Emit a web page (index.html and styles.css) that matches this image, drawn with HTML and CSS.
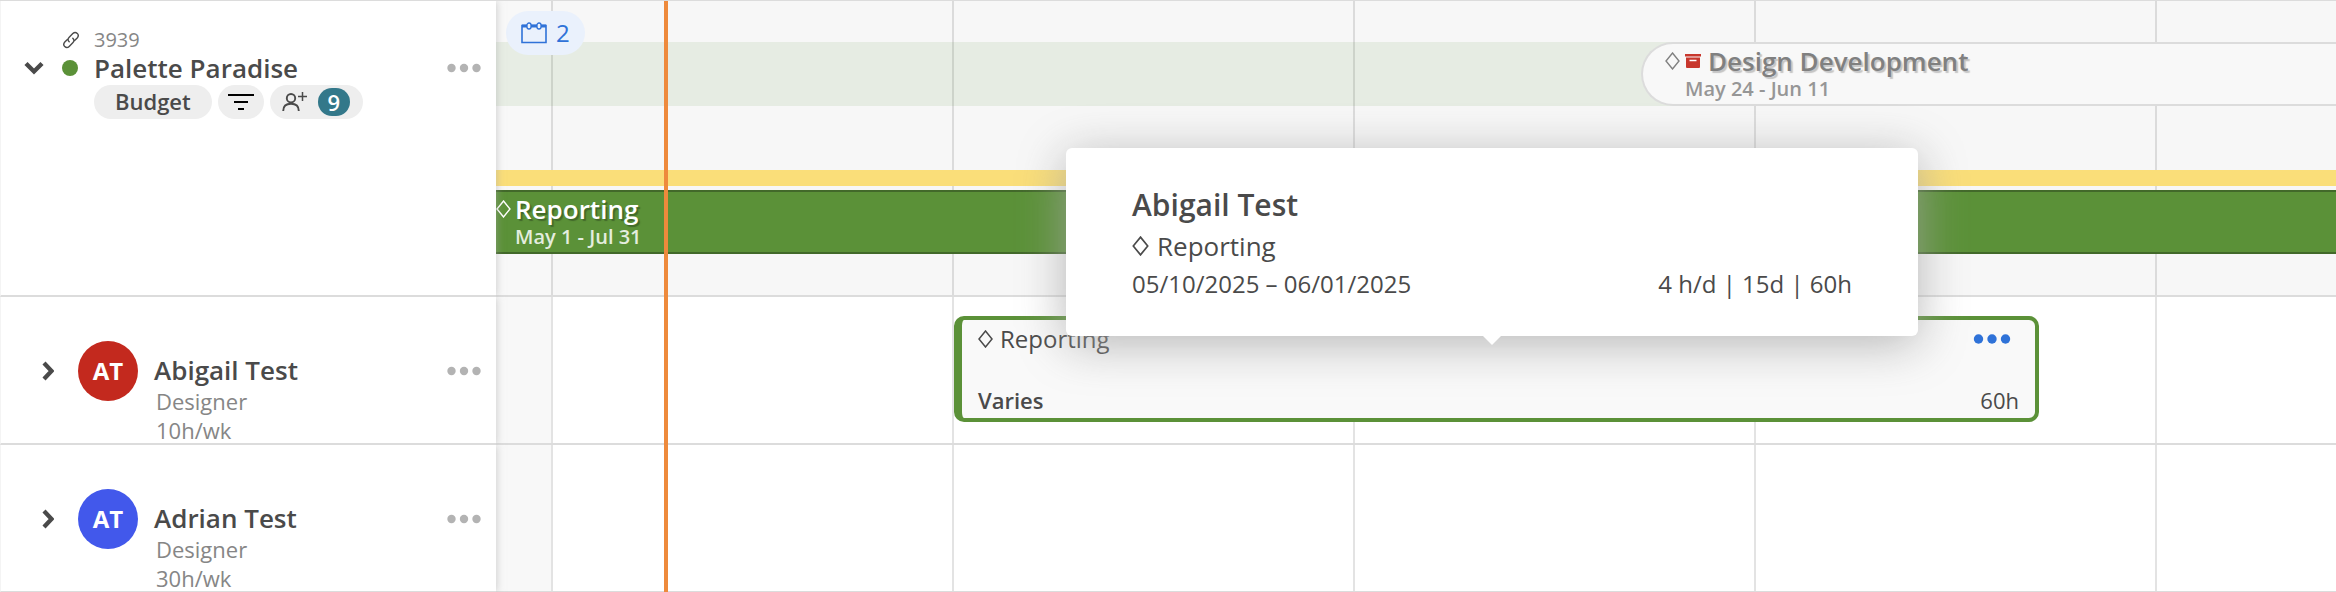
FILE: index.html
```
<!DOCTYPE html>
<html lang="en">
<head>
    <meta charset="UTF-8">
    <meta name="viewport" content="width=device-width, initial-scale=1.0">
    <title>Project schedule</title>
    <link rel="stylesheet" href="styles.css">
</head>
<body>
    <main class="schedule">
        <div class="weeks">
            <span class="week weekend"></span>
            <span class="week"></span>
            <span class="week"></span>
            <span class="week"></span>
            <span class="week"></span>
        </div>

        <section class="row project-row">
            <div class="side project">
                <svg class="link-icon" width="18" height="18" viewBox="0 0 18 18">
                    <g fill="none" stroke="#4a4a4a" stroke-width="1.4" stroke-linecap="round">
                        <path d="M7.2 10.8C5.6 9.3 5.8 7.6 7 6.4l3.8-3.8c1.4-1.4 3.2-1.4 4.5-.2 1.2 1.3 1.2 3.1-.1 4.5l-2.6 2.6"/>
                        <path d="M10.8 7.2c1.6 1.5 1.4 3.2.2 4.4l-3.8 3.8c-1.4 1.4-3.2 1.4-4.5.2-1.2-1.3-1.2-3.1.1-4.5l2.6-2.6"/>
                    </g>
                </svg>
                <span class="code">3939</span>
                <button class="toggle" aria-label="Collapse project">
                    <svg width="20" height="14" viewBox="0 0 20 14"><path d="M2 2.5l8 8 8-8" fill="none" stroke="#4a4a4a" stroke-width="4.4"/></svg>
                </button>
                <span class="status"></span>
                <h2 class="name">Palette Paradise</h2>
                <button class="menu" aria-label="Project menu">
                    <svg width="34" height="10" viewBox="0 0 34 10" fill="#b3b3b3"><circle cx="4.5" cy="5" r="4.2"/><circle cx="17" cy="5" r="4.2"/><circle cx="29.5" cy="5" r="4.2"/></svg>
                </button>
                <div class="pills">
                    <button class="pill budget">Budget</button>
                    <button class="pill filter" aria-label="Filter">
                        <svg width="26" height="18" viewBox="0 0 26 18"><path d="M0 2h26M6 9h14M10 16h6" stroke="#000" stroke-width="2.2"/></svg>
                    </button>
                    <button class="pill people" aria-label="Add people">
                        <svg width="26" height="20" viewBox="0 0 26 20">
                            <g fill="none" stroke="#4a4a4a" stroke-width="1.9">
                                <circle cx="9" cy="6.2" r="4.2"/>
                                <path d="M1.2 19c0-4.8 2.6-7.3 7.8-7.3s7.8 2.5 7.8 7.3"/>
                                <path d="M16 4.5h9M20.5 0v9" stroke-width="1.5"/>
                            </g>
                        </svg>
                        <span class="count">9</span>
                    </button>
                </div>
            </div>
            <div class="lane">
                <button class="milestones" aria-label="2 milestones">
                    <svg width="26" height="22" viewBox="0 0 26 22">
                        <path d="M1 3.5h24v17H1z" fill="none" stroke="#2f72d8" stroke-width="1.6"/>
                        <path d="M1 4h24" stroke="#2f72d8" stroke-width="3"/>
                        <rect x="6" y="1" width="4" height="6" rx="2" fill="#eaf1fc" stroke="#2f72d8" stroke-width="1.3"/>
                        <rect x="16" y="1" width="4" height="6" rx="2" fill="#eaf1fc" stroke="#2f72d8" stroke-width="1.3"/>
                    </svg>
                    2
                </button>
                <div class="band">
                    <div class="phase archived">
                        <div class="phase-title">
                            <svg class="diamond" width="15" height="18" viewBox="0 0 15 18"><path d="M7.5 1l6.5 8-6.5 8L1 9z" fill="none" stroke="currentColor" stroke-width="1.4"/></svg>
                            <svg class="archive" width="16" height="14" viewBox="0 0 16 14"><path d="M0 0h16v2.500H0zM1 3.500h14V13q0 1-1 1H2q-1 0-1-1z" fill="#c8372d"/><path d="M4.500 6.500h7" stroke="#fff" stroke-width="1.500"/></svg>
                            <span>Design Development</span>
                        </div>
                        <div class="phase-dates">May 24 - Jun 11</div>
                    </div>
                </div>
                <div class="budget-line"></div>
                <div class="phase active">
                    <div class="phase-title">
                        <svg class="diamond" width="15" height="18" viewBox="0 0 15 18"><path d="M7.5 1l6.5 8-6.5 8L1 9z" fill="none" stroke="currentColor" stroke-width="1.4"/></svg>
                        <span>Reporting</span>
                    </div>
                    <div class="phase-dates">May 1 - Jul 31</div>
                </div>
            </div>
        </section>

        <section class="row">
            <div class="side person">
                <button class="toggle" aria-label="Expand Abigail Test">
                    <svg width="12" height="20" viewBox="0 0 12 20"><path d="M2 2l7.5 8L2 18" fill="none" stroke="#4a4a4a" stroke-width="4.2"/></svg>
                </button>
                <span class="avatar red">AT</span>
                <div class="details">
                    <h2 class="name">Abigail Test</h2>
                    <p>Designer</p>
                    <p>10h/wk</p>
                </div>
                <button class="menu" aria-label="Abigail Test menu">
                    <svg width="34" height="10" viewBox="0 0 34 10" fill="#b3b3b3"><circle cx="4.5" cy="5" r="4.2"/><circle cx="17" cy="5" r="4.2"/><circle cx="29.5" cy="5" r="4.2"/></svg>
                </button>
            </div>
            <div class="lane">
                <article class="assignment">
                    <div class="line">
                        <span class="task">
                            <svg class="diamond" width="15" height="18" viewBox="0 0 15 18"><path d="M7.5 1l6.5 8-6.5 8L1 9z" fill="none" stroke="currentColor" stroke-width="1.5"/></svg>
                            Reporting
                        </span>
                        <button class="more" aria-label="Assignment menu">
                            <svg width="38" height="10" viewBox="0 0 38 10" fill="#2f72d8"><circle cx="5.5" cy="5" r="4.7"/><circle cx="19" cy="5" r="4.7"/><circle cx="32.5" cy="5" r="4.7"/></svg>
                        </button>
                    </div>
                    <div class="line totals">
                        <strong>Varies</strong>
                        <span>60h</span>
                    </div>
                    <div class="tooltip" role="tooltip">
                        <h3>Abigail Test</h3>
                        <div class="tooltip-task">
                            <svg class="diamond" width="17" height="20" viewBox="0 0 15 18"><path d="M7.5 1l6.5 8-6.5 8L1 9z" fill="none" stroke="currentColor" stroke-width="1.5"/></svg>
                            Reporting
                        </div>
                        <div class="tooltip-meta">
                            <span>05/10/2025 – 06/01/2025</span>
                            <span>4 h/d | 15d | 60h</span>
                        </div>
                    </div>
                </article>
            </div>
        </section>

        <section class="row">
            <div class="side person">
                <button class="toggle" aria-label="Expand Adrian Test">
                    <svg width="12" height="20" viewBox="0 0 12 20"><path d="M2 2l7.5 8L2 18" fill="none" stroke="#4a4a4a" stroke-width="4.2"/></svg>
                </button>
                <span class="avatar blue">AT</span>
                <div class="details">
                    <h2 class="name">Adrian Test</h2>
                    <p>Designer</p>
                    <p>30h/wk</p>
                </div>
                <button class="menu" aria-label="Adrian Test menu">
                    <svg width="34" height="10" viewBox="0 0 34 10" fill="#b3b3b3"><circle cx="4.5" cy="5" r="4.2"/><circle cx="17" cy="5" r="4.2"/><circle cx="29.5" cy="5" r="4.2"/></svg>
                </button>
            </div>
            <div class="lane"></div>
        </section>

        <div class="today"></div>
    </main>
</body>
</html>
```
FILE: styles.css
```
* {
    box-sizing: border-box;
}

body {
    margin: 0;
    font-family: "Open Sans", "Noto Sans", sans-serif;
    font-size: 22px;
    line-height: 28px;
    color: #4a4a4a;
    background-color: #fff;
}

h2, h3, p {
    margin: 0;
}

button {
    display: flex;
    align-items: center;
    padding: 0;
    border: none;
    background: none;
    font: inherit;
    color: inherit;
    cursor: pointer;
}

svg {
    display: block;
    flex: none;
}

.schedule {
    position: relative;
    border-top: 1px solid #dcdcdc;
    overflow: hidden;
}

/* week columns, painted over the row backgrounds and under the lanes */
.weeks {
    position: absolute;
    top: 0;
    bottom: 0;
    left: 496px;
    right: 0;
    display: grid;
    grid-template-columns: 57px repeat(4, 401px);
}

.week {
    border-right: 2px solid rgba(0, 0, 0, 0.11);
}

.weekend {
    background-color: #f8f8f8;
    background-clip: padding-box;
}

.row {
    display: grid;
    grid-template-columns: 496px 1fr;
    min-height: 148px;
}

.row:last-of-type {
    min-height: 147px;
}

.project-row {
    min-height: 296px;
    background-color: #f7f7f7;
}

.side,
.lane {
    position: relative;
    border-bottom: 2px solid #dcdcdc;
}

.row:last-of-type .side,
.row:last-of-type .lane {
    border-bottom-width: 1px;
}

.side {
    z-index: 1;
    background-color: #fff;
    border-left: 1px solid #f4f4f4;
    box-shadow: 0 0 8px rgba(165, 165, 165, 0.6);
    clip-path: inset(0 -12px 0 0);
}

/* project cell */
.project {
    display: grid;
    grid-template-columns: 22px 16px 1fr 34px;
    grid-auto-rows: 28px;
    column-gap: 16px;
    align-content: start;
    align-items: center;
    padding: 25px 15px 0 23px;
}

.link-icon {
    grid-column: 2;
}

.code {
    grid-column: 3 / 5;
    font-size: 20px;
    color: #868686;
}

.status {
    width: 16px;
    height: 16px;
    border-radius: 50%;
    background-color: #5b9138;
}

.name {
    font-size: 26px;
    font-weight: 600;
    line-height: 28px;
}

.pills {
    grid-column: 3 / 5;
    align-self: start;
    display: flex;
    gap: 6px;
    padding-top: 3px;
}

.pill {
    height: 34px;
    border-radius: 17px;
    background-color: #eee;
}

.budget {
    padding: 0 21px 2px;
    font-weight: 600;
}

.filter {
    padding: 0 10px;
}

.people {
    gap: 10px;
    padding: 0 13px 0 12px;
}

.count {
    width: 32px;
    border-radius: 14px;
    background-color: #33788a;
    color: #fff;
    font-weight: 600;
    text-align: center;
}

/* person cell */
.person {
    display: flex;
    align-items: flex-start;
    padding: 44px 15px 0 41px;
}

.person .toggle,
.person .menu {
    height: 60px;
}

.avatar {
    width: 60px;
    margin: 0 16px 0 24px;
    border-radius: 50%;
    color: #fff;
    font-size: 24px;
    font-weight: 700;
    line-height: 60px;
    text-align: center;
}

.red {
    background-color: #c3291e;
}

.blue {
    background-color: #4258eb;
}

.details {
    flex: 1;
    height: 102px;
    padding-top: 15px;
    color: #868686;
}

.details .name {
    margin-bottom: 3px;
    color: #4a4a4a;
}

.details p {
    padding-left: 2px;
    line-height: 29px;
}

/* timeline */
.lane {
    min-width: 0;
}

.project-row .lane {
    padding-top: 41px;
}

.milestones {
    position: absolute;
    top: 10px;
    left: 10px;
    gap: 9px;
    height: 44px;
    padding: 0 15px;
    border-radius: 22px;
    background-color: #eaf1fc;
    color: #2f72d8;
    font-size: 24px;
}

.band {
    padding-left: 1145px;
    background-color: rgba(91, 145, 56, 0.1);
}

.phase {
    height: 64px;
    padding-top: 3px;
    border: 2px solid;
    border-width: 2px 0;
}

.phase-title {
    display: flex;
    align-items: center;
    gap: 5px;
    font-size: 26px;
    font-weight: 600;
}

.phase-dates {
    padding-left: 20px;
    font-size: 20px;
    font-weight: 600;
}

.archived {
    padding-left: 22px;
    border-color: #dcdcdc;
    border-left-width: 2px;
    border-radius: 32px 0 0 32px;
    background-color: #f8f8f8;
    color: #808080;
}

.archived .phase-title span {
    padding-left: 2px;
    text-shadow: 2px 2px 1px #c4c4c4;
}

.archived .phase-dates {
    color: #969696;
}

.budget-line {
    height: 16px;
    margin: 64px 0 4px;
    background-color: #fade79;
}

.active {
    border-color: #42692a;
    background-color: #5b9138;
    color: #fff;
}

.active .phase-title {
    gap: 4px;
    text-shadow: 2px 2px 1px #42692a;
}

.active .phase-dates {
    padding-left: 19px;
    color: #e4eddf;
}

.assignment {
    position: relative;
    z-index: 3;
    display: flex;
    flex-direction: column;
    justify-content: space-between;
    width: 1085px;
    height: 106px;
    margin: 19px 0 0 458px;
    padding: 5px 16px 4px;
    border: 4px solid #5b9138;
    border-left-width: 8px;
    border-radius: 10px;
    background-color: #f9f9f9;
}

.line {
    display: flex;
    justify-content: space-between;
}

.task {
    display: flex;
    align-items: center;
    gap: 7px;
    font-size: 24px;
}

.more {
    margin-right: 8px;
}

.totals strong {
    font-weight: 600;
}

.tooltip {
    position: absolute;
    bottom: 82px;
    left: 104px;
    width: 852px;
    padding: 36px 66px 34px;
    border-radius: 6px;
    background-color: #fff;
    box-shadow: 0 8px 48px rgba(165, 165, 165, 0.8);
}

.tooltip::after {
    content: "";
    position: absolute;
    top: 100%;
    left: 50%;
    margin-left: -9px;
    border: 9px solid transparent;
    border-top-color: #fff;
    border-bottom: none;
}

.tooltip h3 {
    font-size: 30px;
    font-weight: 600;
    line-height: 42px;
}

.tooltip-task {
    display: flex;
    align-items: center;
    gap: 8px;
    font-size: 26px;
    line-height: 40px;
}

.tooltip-meta {
    display: flex;
    justify-content: space-between;
    font-size: 24px;
    line-height: 36px;
}

.today {
    position: absolute;
    top: 0;
    bottom: 0;
    left: 664px;
    width: 4px;
    background-color: #ee8a3c;
}
```
